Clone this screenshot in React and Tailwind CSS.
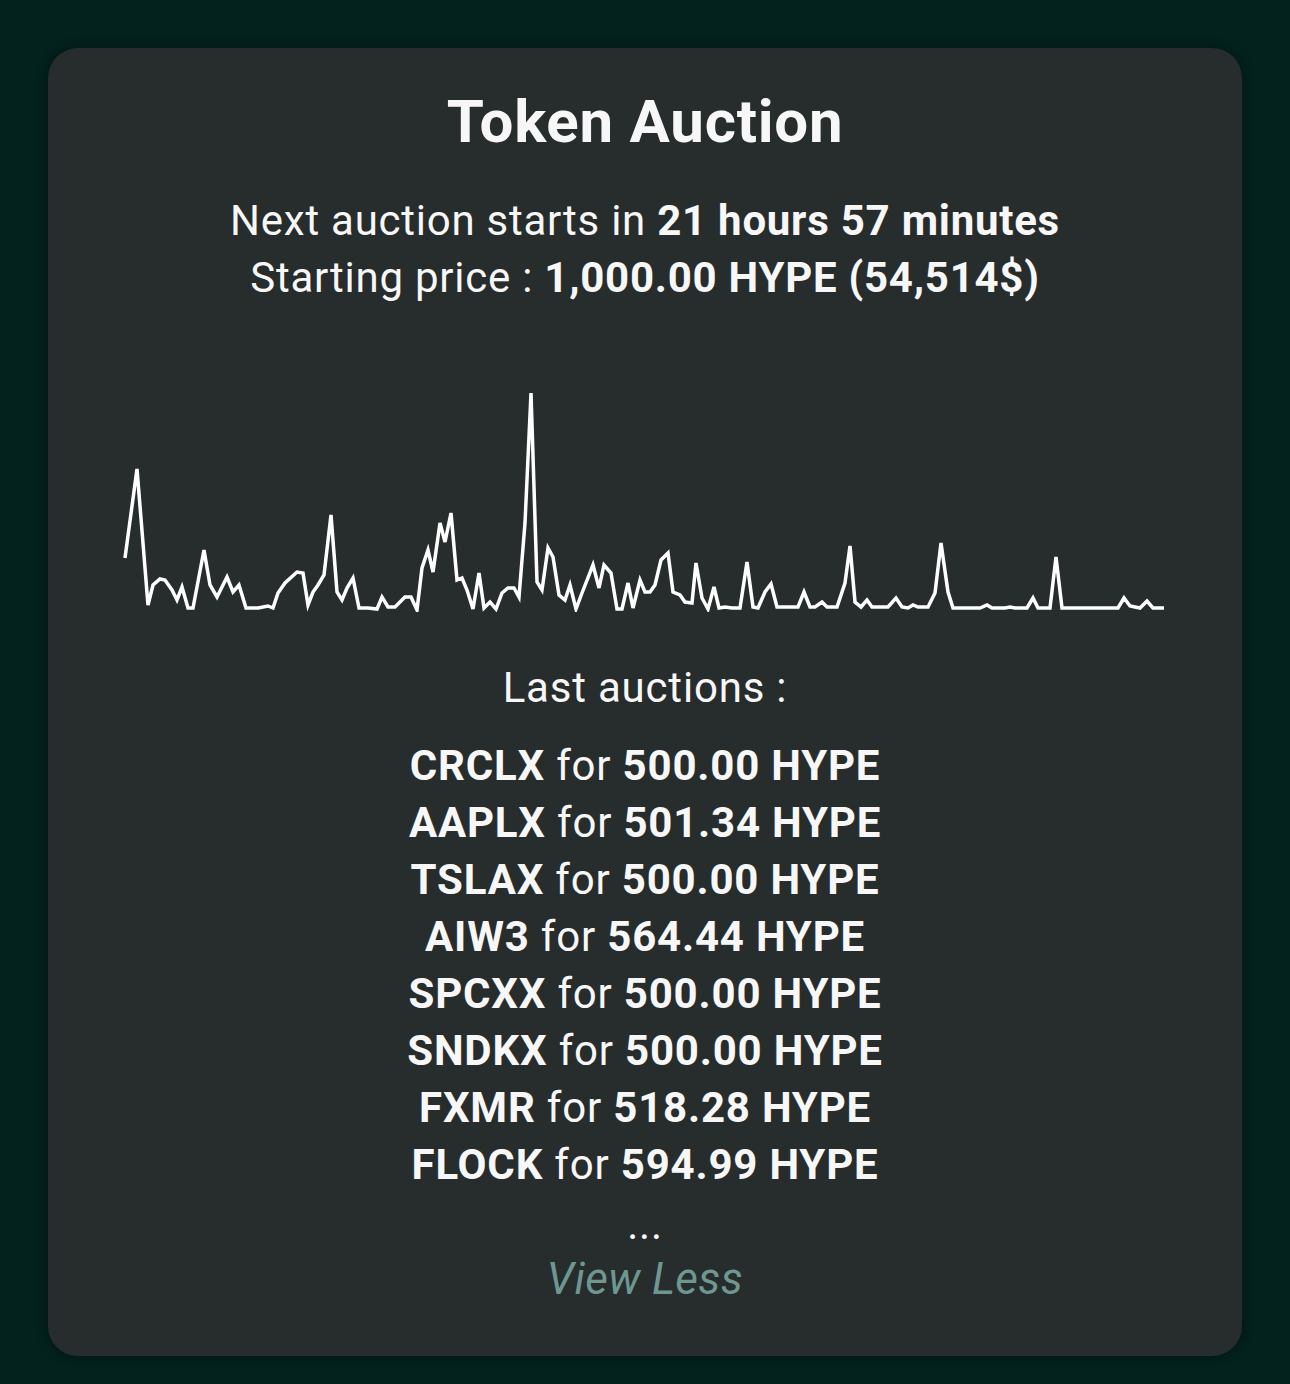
import React from "react";

const pts = [
  [125,558],[137,469],[148,605],[153,585],[160,579],[165,580],[172,590],[177,600],[182,587],[188,608],[193,608],[204,550],[210,585],[217,597],[227,577],[233,592],[239,585],[246,608],[258,608],[268,606],[273,608],[278,593],[285,583],[297,572],[303,573],[308,605],[313,592],[318,585],[324,575],[331,515],
  [337,592],[342,600],[347,588],[353,578],[359,608],[368,608],[377,609],[382,597],[388,607],[395,607],[405,597],[411,597],[417,610],[422,568],[428,550],[433,572],[440,523],[445,542],[451,513],[457,580],[462,578],[467,590],[473,609],[479,573],[484,608],[490,602],[496,609],[502,593],[508,588],[514,588],[519,597],[525,523],[531,393],[537,582],[542,590],
  [548,548],[553,557],[559,595],[565,600],[570,585],[576,609],[582,593],[593,565],[599,588],[604,565],[611,573],[617,609],[622,609],[628,583],[633,608],[640,580],[645,592],[650,592],[655,585],[661,560],[668,553],[673,592],[680,595],[685,602],[692,603],[696,563],[702,598],[708,609],[714,587],[719,608],[725,607],[732,608],[740,608],[747,562],[753,607],
  [758,608],[765,592],[771,584],[777,607],[798,607],[804,592],[810,607],[815,607],[822,602],[827,607],[837,607],[845,583],[850,546],[855,602],[861,607],[867,600],[872,607],[888,607],[896,598],[902,607],[908,608],[913,605],[918,607],[928,607],[935,593],[941,543],[948,592],[953,608],[965,608],
  [980,608],[987,605],[992,608],[1005,608],[1010,607],[1015,608],[1027,608],[1033,598],[1038,608],[1050,608],[1056,557],[1062,608],[1118,608],[1124,598],[1130,606],[1135,607],[1140,608],[1147,601],[1153,608],[1164,608]
];

const points = pts.map(([x, y]) => `${x - 122},${y - 390}`).join(" ");

const auctions = [
  ["CRCLX", "500.00"],
  ["AAPLX", "501.34"],
  ["TSLAX", "500.00"],
  ["AIW3", "564.44"],
  ["SPCXX", "500.00"],
  ["SNDKX", "500.00"],
  ["FXMR", "518.28"],
  ["FLOCK", "594.99"],
];

export default function App() {
  return (
    <div
      className="w-[1290px] h-[1384px] bg-[#03211d] pt-[48px] px-[48px]"
      style={{ fontFamily: "Roboto, 'Noto Sans', sans-serif" }}
    >
      <div className="w-[1194px] h-[1308px] bg-[#272c2c] rounded-[30px] shadow-[0_0_12px_rgba(0,0,0,0.35)] flex flex-col items-center text-[#f7f7f7] pt-[42px]">
        <h1 className="text-[60px] leading-[64px] font-bold tracking-[0.75px]">Token Auction</h1>
        <div className="mt-[38px] text-[42px] leading-[57px] text-center tracking-[0.75px]">
          <div>
            Next auction starts in <span className="font-bold">21 hours 57 minutes</span>
          </div>
          <div>
            Starting price : <span className="font-bold">1,000.00 HYPE (54,514$)</span>
          </div>
        </div>
        <svg
          className="mt-[84px] self-start ml-[74px]"
          width="1046"
          height="222"
          viewBox="0 0 1046 222"
        >
          <polyline
            points={points}
            fill="none"
            stroke="#ffffff"
            strokeWidth="3.5"
            strokeLinejoin="miter"
            strokeLinecap="butt"
          />
        </svg>
        <div className="mt-[47px] text-[42px] leading-[57px] tracking-[0.8px]">Last auctions :</div>
        <div className="mt-[21px] text-[42px] leading-[57px] text-center tracking-[0.8px]">
          {auctions.map(([name, price]) => (
            <div key={name}>
              <span className="font-bold">{name}</span> for{" "}
              <span className="font-bold">{price} HYPE</span>
            </div>
          ))}
          <div className="mt-[3px]">...</div>
        </div>
        <div className="mt-[2px] text-[44px] leading-[48px] italic text-[#6f9792] tracking-[0.4px]">View Less</div>
      </div>
    </div>
  );
}
